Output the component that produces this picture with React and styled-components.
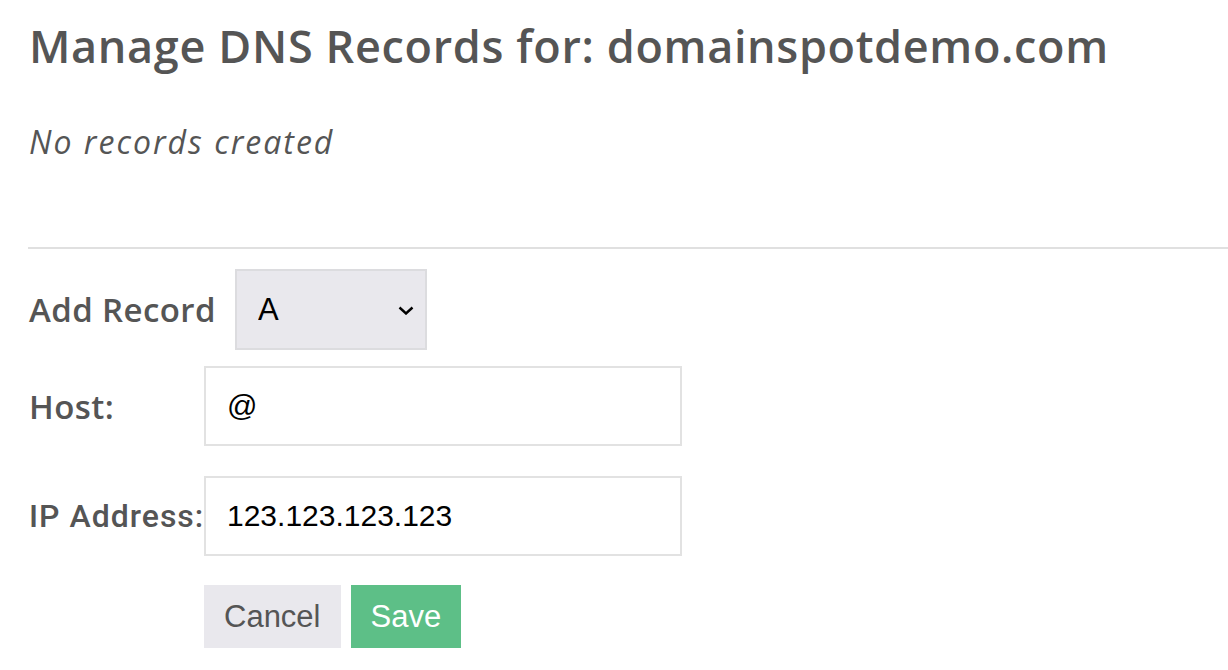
import React, { useState } from "react";
import styled, { createGlobalStyle } from "styled-components";

const GlobalStyle = createGlobalStyle`
  html, body {
    margin: 0;
    padding: 0;
    background: #ffffff;
    overflow: hidden;
  }
`;

const Page = styled.div`
  padding-left: 29px;
  font-family: "Open Sans", sans-serif;
  color: #555555;
`;

const Title = styled.h1`
  margin: 19px 0 0;
  font-size: 45px;
  line-height: 54px;
  font-weight: 600;
  letter-spacing: 0.65px;
  white-space: nowrap;
`;

const Empty = styled.p`
  margin: 49px 0 0;
  font-size: 32px;
  line-height: 40px;
  font-style: italic;
  letter-spacing: 2px;
`;

const Divider = styled.hr`
  margin: 85px 0 0 -1px;
  border: 0;
  height: 2px;
  background: #e0e0e0;
`;

const Form = styled.form`
  display: flex;
  flex-direction: column;
  padding-top: 20px;
`;

const Row = styled.div`
  display: flex;
  align-items: center;
  margin-top: ${(p) => p.$top || 0}px;
`;

const Label = styled.label`
  flex-shrink: 0;
  width: ${(p) => (p.$auto ? "auto" : "175px")};
  margin-right: ${(p) => p.$gap || 0}px;
  font-family: ${(p) =>
    p.$system ? `"Roboto", "Liberation Sans", sans-serif` : `"Open Sans", sans-serif`};
  font-size: ${(p) => (p.$system ? 32 : 33)}px;
  font-weight: ${(p) => (p.$system ? 500 : 600)};
  letter-spacing: ${(p) => (p.$system ? 1 : 0.4)}px;
  color: #555555;
  white-space: nowrap;
`;

const SelectWrap = styled.div`
  position: relative;
  width: 192px;
  height: 81px;
`;

const Select = styled.select`
  appearance: none;
  -webkit-appearance: none;
  box-sizing: border-box;
  width: 100%;
  height: 100%;
  padding: 0 0 0 21px;
  border: 2px solid #dcdcdf;
  border-radius: 0;
  background: #e9e8ed;
  font-family: "Liberation Sans", Arial, sans-serif;
  font-size: 31px;
  color: #000000;
  outline: none;
`;

const Chevron = styled.svg`
  position: absolute;
  right: 13px;
  top: 37px;
  pointer-events: none;
`;

const Field = styled.input`
  box-sizing: border-box;
  width: 478px;
  height: 80px;
  padding: 0 21px;
  border: 2px solid #e2e2e2;
  border-radius: 0;
  font-family: "Liberation Sans", Arial, sans-serif;
  font-size: 30px;
  color: #000000;
  caret-color: #000000;
  outline: none;
`;

const Actions = styled.div`
  display: flex;
  gap: 10px;
  margin: 29px 0 0 175px;
`;

const Button = styled.button`
  height: 63px;
  padding: 0 20px;
  border: 0;
  border-radius: 0;
  background: ${(p) => (p.$primary ? "#5dbf87" : "#e9e8ed")};
  color: ${(p) => (p.$primary ? "#ffffff" : "#555555")};
  font-family: "Liberation Sans", Arial, sans-serif;
  font-size: 31px;
  cursor: pointer;
`;

export default function App() {
  const [type, setType] = useState("A");
  const [host, setHost] = useState("@");
  const [ip, setIp] = useState("123.123.123.123");

  return (
    <Page>
      <GlobalStyle />
      <Title>Manage DNS Records for: domainspotdemo.com</Title>
      <Empty>No records created</Empty>
      <Divider />
      <Form onSubmit={(e) => e.preventDefault()}>
        <Row>
          <Label $auto $gap={19}>Add Record</Label>
          <SelectWrap>
            <Select value={type} onChange={(e) => setType(e.target.value)}>
              <option>A</option>
              <option>AAAA</option>
              <option>CNAME</option>
              <option>MX</option>
              <option>TXT</option>
            </Select>
            <Chevron width="16" height="9" viewBox="0 0 16 9" fill="none">
              <path d="M1.5 1.5 L8 7.5 L14.5 1.5" stroke="#000" strokeWidth="2.4" />
            </Chevron>
          </SelectWrap>
        </Row>
        <Row $top={16}>
          <Label>Host:</Label>
          <Field value={host} onChange={(e) => setHost(e.target.value)} />
        </Row>
        <Row $top={30}>
          <Label $system>IP Address:</Label>
          <Field
            autoFocus
            value={ip}
            onChange={(e) => setIp(e.target.value)}
            onFocus={(e) => e.target.setSelectionRange(99, 99)}
          />
        </Row>
        <Actions>
          <Button type="button">Cancel</Button>
          <Button type="submit" $primary>
            Save
          </Button>
        </Actions>
      </Form>
    </Page>
  );
}
